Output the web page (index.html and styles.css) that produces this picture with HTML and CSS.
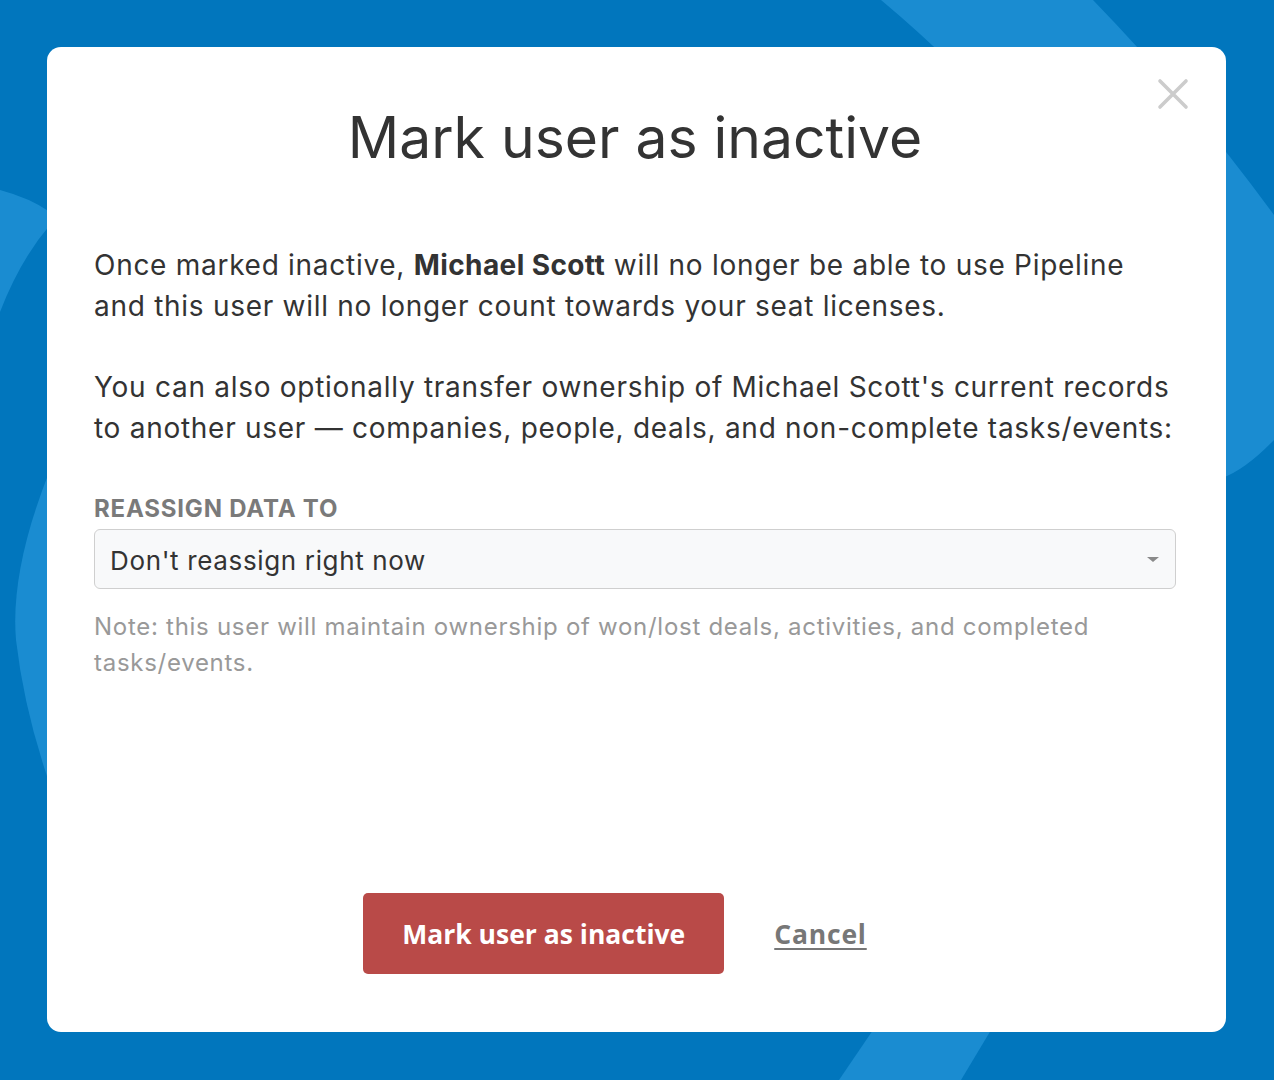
FILE: index.html
```html
<!DOCTYPE html>
<html lang="en">
<head>
<meta charset="utf-8">
<title>Mark user as inactive</title>
<link rel="stylesheet" href="styles.css">
</head>
<body>
<svg class="backdrop" width="1274" height="1080" viewBox="0 0 1274 1080" aria-hidden="true">
  <path class="swoosh" d="M881 0 L1093 0 Q1190 100 1274 215 L1274 440 Q1245 470 1222 478 Q1120 200 881 0 Z"/>
  <path class="swoosh" d="M0 190 Q30 198 50 212 L50 225 Q20 260 0 312 Z"/>
  <path class="swoosh" d="M50 470 Q10 570 16 640 Q24 710 50 785 Z"/>
  <path class="swoosh" d="M873 1030 L991 1030 L961 1080 L839 1080 Z"/>
</svg>
<div class="stage">
  <div class="modal">
    <button class="close" aria-label="Close">
      <svg width="32" height="32" viewBox="0 0 32 32"><path d="M3 3 L29 29 M29 3 L3 29" stroke="#cccccc" stroke-width="3.6" stroke-linecap="round" fill="none"/></svg>
    </button>
    <h1 class="title">Mark user as inactive</h1>
    <p class="body-text">Once marked inactive, <strong>Michael Scott</strong> will no longer be able to use Pipeline and this user will no longer count towards your seat licenses.</p>
    <p class="body-text">You can also optionally transfer ownership of Michael Scott's current records to another user — companies, people, deals, and non-complete tasks/events:</p>
    <label class="field-label">REASSIGN DATA TO</label>
    <div class="select">
      <span class="select-value">Don't reassign right now</span>
      <span class="caret"></span>
    </div>
    <p class="note">Note: this user will maintain ownership of won/lost deals, activities, and completed tasks/events.</p>
    <div class="actions">
      <button class="btn-danger">Mark user as inactive</button>
      <a class="cancel" href="#">Cancel</a>
    </div>
  </div>
</div>
</body>
</html>
```
FILE: styles.css
```css
html, body {
  margin: 0;
  padding: 0;
}
body {
  width: 1274px;
  height: 1080px;
  overflow: hidden;
  background: #0176bd;
  position: relative;
  font-family: Inter, "Liberation Sans", sans-serif;
}
.backdrop {
  position: absolute;
  left: 0;
  top: 0;
}
.swoosh {
  fill: #1a8cd1;
}
.stage {
  position: relative;
  padding: 47px;
  box-sizing: border-box;
  height: 1080px;
}
.modal {
  position: relative;
  width: 1179px;
  height: 985px;
  box-sizing: border-box;
  background: #ffffff;
  border-radius: 14px;
  padding: 55px 50px 58px 47px;
  display: flex;
  flex-direction: column;
}
.close {
  position: absolute;
  top: 31px;
  right: 37px;
  width: 32px;
  height: 32px;
  padding: 0;
  border: 0;
  background: none;
  cursor: pointer;
}
.close svg {
  display: block;
}
.title {
  margin: 0 0 71px;
  font-size: 57px;
  line-height: 72px;
  font-weight: 400;
  color: #333333;
  text-align: center;
}
.body-text {
  margin: 0 0 40px;
  font-size: 28px;
  line-height: 41px;
  letter-spacing: 0.72px;
  color: #333333;
}
.body-text strong {
  font-weight: 700;
  letter-spacing: 0.4px;
}
.body-text + .body-text {
  margin-bottom: 44px;
}
.field-label {
  display: block;
  font-size: 24px;
  line-height: 32px;
  font-weight: 700;
  letter-spacing: 0.8px;
  color: #7a7a7a;
  margin-bottom: 4px;
}
.select {
  height: 60px;
  box-sizing: border-box;
  border: 1.5px solid #cfcfcf;
  border-radius: 6px;
  background: #f8f9fa;
  display: flex;
  align-items: center;
  justify-content: space-between;
  padding: 3px 16px 0 15px;
}
.select-value {
  font-size: 26px;
  letter-spacing: 0.65px;
  color: #333333;
}
.caret {
  width: 0;
  height: 0;
  margin-top: -3px;
  border-left: 6px solid transparent;
  border-right: 6px solid transparent;
  border-top: 5px solid #8a8a8a;
}
.note {
  margin: 20px 0 0;
  font-size: 24px;
  line-height: 36px;
  letter-spacing: 0.72px;
  color: #999999;
}
.actions {
  margin-top: auto;
  display: flex;
  justify-content: center;
  align-items: center;
  gap: 50px;
  padding-right: 40px;
}
.btn-danger {
  width: 361px;
  height: 81px;
  border: 0;
  border-radius: 5px;
  background: #b94a48;
  color: #ffffff;
  font-family: "Open Sans", Lato, sans-serif;
  font-weight: 700;
  font-size: 26.5px;
  cursor: pointer;
}
.cancel {
  font-family: "Open Sans", Lato, sans-serif;
  font-weight: 700;
  font-size: 26.5px;
  letter-spacing: 0.8px;
  color: #777777;
  text-decoration: underline;
  text-underline-offset: 4px;
}
```
